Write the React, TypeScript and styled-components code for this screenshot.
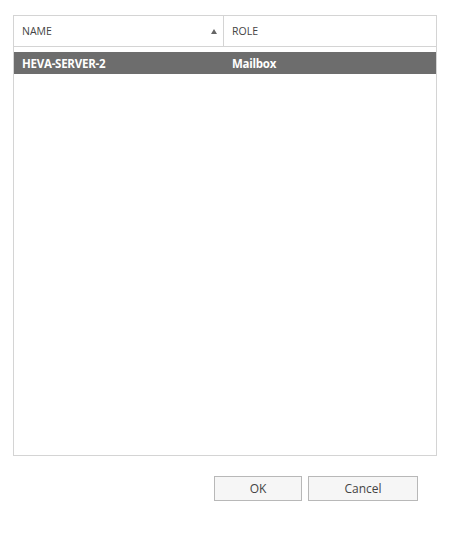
import React from "react";
import styled, { createGlobalStyle } from "styled-components";

const Global = createGlobalStyle`
  html, body { margin: 0; padding: 0; background: #fff; }
  body { font-family: "Open Sans", "Noto Sans", "Liberation Sans", sans-serif; }
`;

const Page = styled.div`
  width: 450px;
  height: 534px;
  padding: 15px 13px 0 13px;
  box-sizing: border-box;
  display: flex;
  flex-direction: column;
`;

const Grid = styled.div`
  width: 424px;
  height: 441px;
  box-sizing: border-box;
  border: 1px solid #d4d4d4;
  display: flex;
  flex-direction: column;
`;

const HeaderRow = styled.div`
  display: grid;
  grid-template-columns: 210px 1fr;
  height: 30px;
  border-bottom: 1px solid #d4d4d4;
  box-sizing: content-box;
`;

const HeaderCell = styled.div<{ $divider?: boolean }>`
  display: flex;
  align-items: center;
  justify-content: space-between;
  padding: 0 8px 0 8px;
  font-size: 10.5px;
  color: #444;
  border-right: ${(p) => (p.$divider ? "1px solid #d4d4d4" : "none")};
`;

const SortArrow = styled.span`
  width: 0;
  height: 0;
  border-left: 3.5px solid transparent;
  border-right: 3.5px solid transparent;
  border-bottom: 5px solid #666;
  margin-right: -2px;
`;

const Body = styled.div`
  padding-top: 5px;
  flex: 1;
`;

const DataRow = styled.div<{ $selected?: boolean }>`
  display: grid;
  grid-template-columns: 210px 1fr;
  height: 22px;
  align-items: center;
  background: ${(p) => (p.$selected ? "#6d6d6d" : "transparent")};
  color: ${(p) => (p.$selected ? "#fff" : "#333")};
  font-size: 11.5px;
  font-weight: 700;
  letter-spacing: -0.25px;
`;

const DataCell = styled.div`
  padding-left: 8px;
`;

const Footer = styled.div`
  display: flex;
  justify-content: flex-end;
  gap: 6px;
  padding: 20px 19px 0 0;
`;

const Button = styled.button<{ $w: number }>`
  width: ${(p) => p.$w}px;
  height: 25px;
  box-sizing: border-box;
  border: 1px solid #b8b8b8;
  background: #f6f6f6;
  color: #444;
  font-family: "Open Sans", "Noto Sans", "Liberation Sans", sans-serif;
  font-size: 12px;
  padding: 0;
`;

export default function App() {
  return (
    <>
      <Global />
      <Page>
        <Grid>
          <HeaderRow>
            <HeaderCell $divider>
              <span>NAME</span>
              <SortArrow />
            </HeaderCell>
            <HeaderCell>
              <span>ROLE</span>
            </HeaderCell>
          </HeaderRow>
          <Body>
            <DataRow $selected>
              <DataCell>HEVA-SERVER-2</DataCell>
              <DataCell>Mailbox</DataCell>
            </DataRow>
          </Body>
        </Grid>
        <Footer>
          <Button $w={88}>OK</Button>
          <Button $w={110}>Cancel</Button>
        </Footer>
      </Page>
    </>
  );
}
